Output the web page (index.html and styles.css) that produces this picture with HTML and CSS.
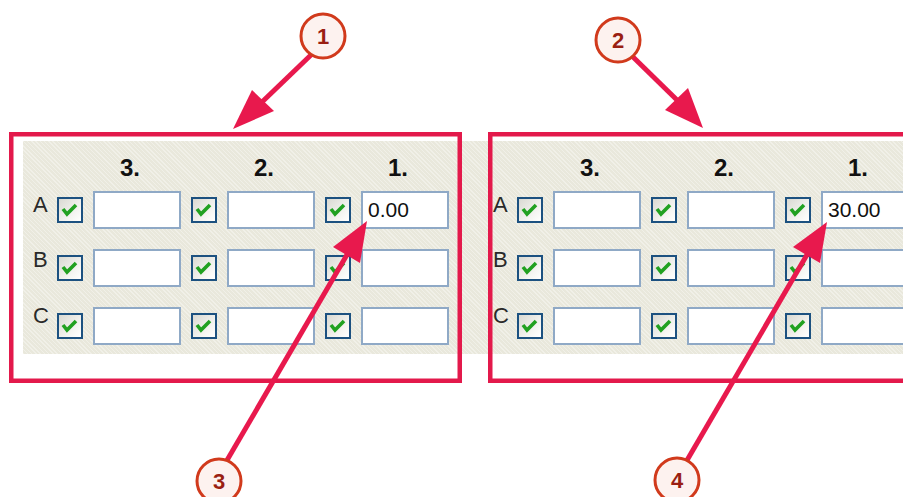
FILE: index.html
```html
<!DOCTYPE html>
<html lang="en">

<head>
    <meta charset="UTF-8" />
    <title>Price tiers</title>
    <link rel="stylesheet" href="styles.css">
</head>

<body>
    <div class="page">
        <div class="strip">
            <!-- before -->
            <div class="panel">
                <div class="row head">
                    <span></span><span></span><span class="col-title">3.</span>
                    <span></span><span class="col-title">2.</span>
                    <span></span><span class="col-title">1.</span>
                </div>
                <div class="row">
                    <span class="row-label row-label--a">A</span>
                    <span class="check"><svg viewBox="0 0 22 22"><polyline points="4,10 8,15 17,6" /></svg></span>
                    <input class="field" type="text" value="" readonly>
                    <span class="check"><svg viewBox="0 0 22 22"><polyline points="4,10 8,15 17,6" /></svg></span>
                    <input class="field" type="text" value="" readonly>
                    <span class="check"><svg viewBox="0 0 22 22"><polyline points="4,10 8,15 17,6" /></svg></span>
                    <input class="field" type="text" value="0.00" readonly>
                </div>
                <div class="row">
                    <span class="row-label row-label--b">B</span>
                    <span class="check"><svg viewBox="0 0 22 22"><polyline points="4,10 8,15 17,6" /></svg></span>
                    <input class="field" type="text" value="" readonly>
                    <span class="check"><svg viewBox="0 0 22 22"><polyline points="4,10 8,15 17,6" /></svg></span>
                    <input class="field" type="text" value="" readonly>
                    <span class="check"><svg viewBox="0 0 22 22"><polyline points="4,10 8,15 17,6" /></svg></span>
                    <input class="field" type="text" value="" readonly>
                </div>
                <div class="row">
                    <span class="row-label row-label--c">C</span>
                    <span class="check"><svg viewBox="0 0 22 22"><polyline points="4,10 8,15 17,6" /></svg></span>
                    <input class="field" type="text" value="" readonly>
                    <span class="check"><svg viewBox="0 0 22 22"><polyline points="4,10 8,15 17,6" /></svg></span>
                    <input class="field" type="text" value="" readonly>
                    <span class="check"><svg viewBox="0 0 22 22"><polyline points="4,10 8,15 17,6" /></svg></span>
                    <input class="field" type="text" value="" readonly>
                </div>
            </div>

            <!-- after -->
            <div class="panel">
                <div class="row head">
                    <span></span><span></span><span class="col-title">3.</span>
                    <span></span><span class="col-title">2.</span>
                    <span></span><span class="col-title">1.</span>
                </div>
                <div class="row">
                    <span class="row-label row-label--a">A</span>
                    <span class="check"><svg viewBox="0 0 22 22"><polyline points="4,10 8,15 17,6" /></svg></span>
                    <input class="field" type="text" value="" readonly>
                    <span class="check"><svg viewBox="0 0 22 22"><polyline points="4,10 8,15 17,6" /></svg></span>
                    <input class="field" type="text" value="" readonly>
                    <span class="check"><svg viewBox="0 0 22 22"><polyline points="4,10 8,15 17,6" /></svg></span>
                    <input class="field" type="text" value="30.00" readonly>
                </div>
                <div class="row">
                    <span class="row-label row-label--b">B</span>
                    <span class="check"><svg viewBox="0 0 22 22"><polyline points="4,10 8,15 17,6" /></svg></span>
                    <input class="field" type="text" value="" readonly>
                    <span class="check"><svg viewBox="0 0 22 22"><polyline points="4,10 8,15 17,6" /></svg></span>
                    <input class="field" type="text" value="" readonly>
                    <span class="check"><svg viewBox="0 0 22 22"><polyline points="4,10 8,15 17,6" /></svg></span>
                    <input class="field" type="text" value="" readonly>
                </div>
                <div class="row">
                    <span class="row-label row-label--c">C</span>
                    <span class="check"><svg viewBox="0 0 22 22"><polyline points="4,10 8,15 17,6" /></svg></span>
                    <input class="field" type="text" value="" readonly>
                    <span class="check"><svg viewBox="0 0 22 22"><polyline points="4,10 8,15 17,6" /></svg></span>
                    <input class="field" type="text" value="" readonly>
                    <span class="check"><svg viewBox="0 0 22 22"><polyline points="4,10 8,15 17,6" /></svg></span>
                    <input class="field" type="text" value="" readonly>
                </div>
            </div>
        </div>

        <!-- callouts drawn over the screenshot -->
        <svg class="marks" width="903" height="497" viewBox="0 0 903 497">
            <rect class="frame" x="11.25" y="134.25" width="448.5" height="246.5" />
            <rect class="frame" x="490.25" y="134.25" width="500" height="246.5" />

            <line class="arrow-line" x1="312" y1="54" x2="262" y2="102" />
            <polygon class="arrow-head" points="233,129 252,90 274,111" />

            <line class="arrow-line" x1="632" y1="56" x2="677" y2="100" />
            <polygon class="arrow-head" points="703,128 665,110 688,88" />

            <line class="arrow-line" x1="226" y1="462" x2="348" y2="253" />
            <polygon class="arrow-head" points="367,221 333,247 360,263" />

            <line class="arrow-line" x1="686" y1="462" x2="808" y2="253" />
            <polygon class="arrow-head" points="827,222 793,247 820,263" />

            <circle class="badge" cx="323" cy="36" r="22" />
            <text class="badge-num" x="323" y="44">1</text>
            <circle class="badge" cx="618" cy="40" r="22" />
            <text class="badge-num" x="618" y="48">2</text>
            <circle class="badge" cx="219" cy="481" r="22" />
            <text class="badge-num" x="219" y="489">3</text>
            <circle class="badge" cx="677" cy="480" r="22" />
            <text class="badge-num" x="677" y="488">4</text>
        </svg>
    </div>
</body>

</html>
```

FILE: styles.css
```css
body {
    margin: 0;
    background: #fff;
    font-family: "Liberation Sans", Arial, sans-serif;
}

.page {
    position: relative;
    width: 903px;
    height: 497px;
    overflow: hidden;
    background: #fff;
}

/* grey dialog strip behind both panels */
.strip {
    display: flex;
    height: 213px;
    margin: 141px 0 0 23px;
    background-color: #e9e8dc;
    background-image: repeating-linear-gradient(45deg, rgba(255, 255, 255, 0.35) 0 1px, transparent 1px 3px);
}

.panel {
    flex: 0 0 460px;
    display: flex;
    flex-direction: column;
    gap: 20px;
    padding: 15px 0 0 10px;
    box-sizing: border-box;
}

.row {
    display: grid;
    grid-template-columns: 14px 26px 88px 26px 88px 26px 88px;
    column-gap: 10px;
    height: 38px;
    align-items: center;
}

.row.head {
    height: 24px;
    margin-bottom: -9px;
}

.col-title {
    padding-right: 14px;
    text-align: center;
    font-size: 24px;
    line-height: 24px;
    font-weight: bold;
    color: #111;
}

.row-label {
    align-self: start;
    font-size: 22px;
    line-height: 22px;
    color: #2a2a2a;
}

.row-label--a {
    margin-top: 3px;
}

.row-label--b {
    margin-top: 0;
}

.row-label--c {
    margin-top: -2px;
}

.check {
    display: flex;
    width: 26px;
    height: 26px;
    box-sizing: border-box;
    border: 2px solid #1c5180;
    background: linear-gradient(135deg, #d9d9d2, #f6f6f3 70%, #fff);
}

.check svg {
    width: 22px;
    height: 22px;
}

.check polyline {
    fill: none;
    stroke: #21a121;
    stroke-width: 3.6;
}

.field {
    width: 88px;
    height: 38px;
    margin: 0;
    padding: 0 5px;
    box-sizing: border-box;
    border: 2px solid #8fa9c6;
    background: #fff;
    font-family: "Liberation Sans", Arial, sans-serif;
    font-size: 21px;
    color: #111;
    outline: none;
}

/* annotation layer */
.marks {
    position: absolute;
    top: 0;
    left: 0;
}

.frame {
    fill: none;
    stroke: #e3194b;
    stroke-width: 4.5;
}

.arrow-line {
    stroke: #e8194d;
    stroke-width: 5;
}

.arrow-head {
    fill: #e8194d;
}

.badge {
    fill: #fdf2ef;
    stroke: #d13a1c;
    stroke-width: 3;
}

.badge-num {
    font-family: "Liberation Sans", Arial, sans-serif;
    font-size: 22px;
    font-weight: bold;
    fill: #9a1f12;
    text-anchor: middle;
}
```
